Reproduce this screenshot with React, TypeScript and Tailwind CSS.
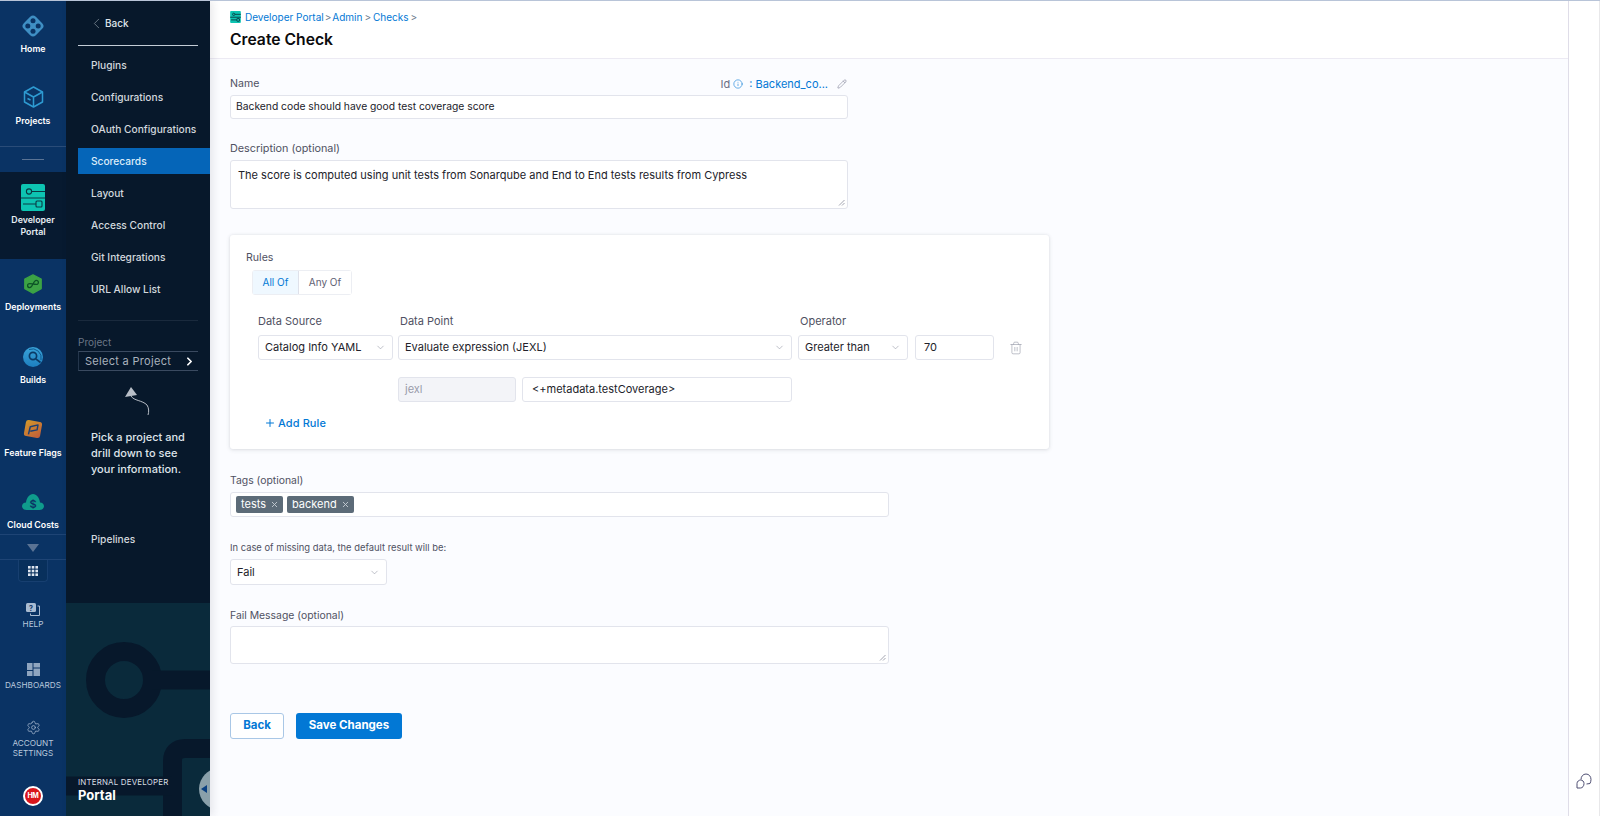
import { ChevronDown, ChevronLeft, ChevronRight, Info, Pencil, Plus, Settings, Trash2, X } from "lucide-react";

const font = "font-['Inter','Liberation_Sans',sans-serif]";

function NavItem({ label, className, gap, children }: { label: string; className: string; gap: string; children: React.ReactNode }) {
  return (
    <div className={`flex flex-col items-center ${className}`}>
      {children}
      <div className={`text-center text-[8.8px] font-semibold leading-[12px] text-white ${gap}`}>{label}</div>
    </div>
  );
}

function BottomItem({ lines, className, gap, children }: { lines: string[]; className: string; gap: string; children: React.ReactNode }) {
  return (
    <div className={`flex flex-col items-center ${className}`}>
      {children}
      <div className={`text-center text-[8.2px] leading-[10px] text-[#b9c8dc] ${gap}`}>
        {lines.map((l) => (
          <div key={l}>{l}</div>
        ))}
      </div>
    </div>
  );
}

function PortalIcon({ w, h, sw }: { w: number; h: number; sw: number }) {
  return (
    <svg width={w} height={h} viewBox="0 0 24 27">
      <rect width="24" height="27" rx="2" fill="#0dc4b2" />
      <path d="M0 14H24M10.5 7.5H24M15 20H2" stroke="#0a3a44" strokeWidth={sw} fill="none" />
      <circle cx="8" cy="7.5" r="2.6" fill="#0dc4b2" stroke="#0a3a44" strokeWidth={sw} />
      <rect x="15" y="17" width="6" height="6" rx="1" fill="#0dc4b2" stroke="#0a3a44" strokeWidth={sw} />
    </svg>
  );
}

function Rail() {
  return (
    <div className="flex w-[66px] shrink-0 flex-col bg-[#0a3364]">
      <NavItem label="Home" className="h-[67px] pt-[13px]" gap="mt-[5px]">
        <svg width="24" height="24" viewBox="0 0 24 24">
          <rect x="3.5" y="3.5" width="17" height="17" rx="4" transform="rotate(45 12 12)" fill="#3f8fc4" />
          <circle cx="12" cy="6.8" r="2.5" fill="#0a3364" />
          <circle cx="12" cy="17.2" r="2.5" fill="#0a3364" />
          <circle cx="6.8" cy="12" r="2.5" fill="#0a3364" />
          <circle cx="17.2" cy="12" r="2.5" fill="#0a3364" />
        </svg>
      </NavItem>
      <NavItem label="Projects" className="h-[78px] pt-[18px]" gap="mt-[7px]">
        <svg width="21" height="22" viewBox="0 0 21 22" fill="none" stroke="#2e9bd2" strokeWidth="1.5" strokeLinejoin="round">
          <path d="M10.5 1L19.5 6V16L10.5 21L1.5 16V6Z" />
          <path d="M1.5 6L10.5 11L19.5 6M10.5 11V21" />
          <path d="M4.5 12.5L7.5 14" />
        </svg>
      </NavItem>
      <div className="flex h-[26px] justify-center border-t border-[#2a4c78] pt-[12px]">
        <div className="h-px w-[22px] bg-[#5a7394]" />
      </div>
      <div className="flex h-[87px] flex-col items-center bg-[#071a30] pt-[12px]">
        <PortalIcon w={24} h={27} sw={1.1} />
        <div className="mt-[3px] text-center text-[8.8px] font-semibold leading-[12px] text-[#e8edf3]">
          Developer
          <br />
          Portal
        </div>
      </div>
      <NavItem label="Deployments" className="h-[73px] pt-[15px]" gap="mt-[7px]">
        <svg width="20" height="20" viewBox="0 0 22 22">
          <path d="M11 1L20 5.5V16L11 21L2 16V5.5Z" fill="#3ca345" strokeLinejoin="round" stroke="#3ca345" strokeWidth="1.5" />
          <path d="M7.5 15C4.5 15 4 10.5 7.5 10.5C9.5 10.5 12 11.5 14.5 11.5C18 11.5 17.5 7 14.5 7C11.5 7 10.5 15 7.5 15Z" fill="none" stroke="#0c5326" strokeWidth="1.4" />
        </svg>
      </NavItem>
      <NavItem label="Builds" className="h-[73px] pt-[15px]" gap="mt-[7px]">
        <svg width="20" height="20" viewBox="0 0 20 20">
          <defs>
            <linearGradient id="bd" x1="0" y1="0" x2="0" y2="1">
              <stop offset="0" stopColor="#3aa3d8" />
              <stop offset="1" stopColor="#1d7fc0" />
            </linearGradient>
          </defs>
          <circle cx="10" cy="10" r="10" fill="url(#bd)" />
          <path d="M6 2.5A9 9 0 0 1 18 13" fill="none" stroke="#0f5a92" strokeWidth="1" />
          <circle cx="10" cy="9" r="3.6" fill="none" stroke="#0b3a66" strokeWidth="1.7" />
          <path d="M12.8 11.8L17.5 15.5" stroke="#0b3a66" strokeWidth="1.7" />
        </svg>
      </NavItem>
      <NavItem label="Feature Flags" className="h-[73px] pt-[14px]" gap="mt-[8px]">
        <svg width="20" height="20" viewBox="0 0 22 22">
          <defs>
            <linearGradient id="ff" x1="0" y1="0" x2="1" y2="1">
              <stop offset="0" stopColor="#d39a2b" />
              <stop offset="1" stopColor="#c05a3a" />
            </linearGradient>
          </defs>
          <rect x="2" y="2" width="18" height="18" rx="3" transform="rotate(10 11 11)" fill="url(#ff)" />
          <path d="M6 17L8 8.5L16.5 6.5L15.5 12L8 13.5" fill="none" stroke="#1d3f73" strokeWidth="1.6" strokeLinejoin="round" />
        </svg>
      </NavItem>
      <NavItem label="Cloud Costs" className="h-[56px] pt-[16px]" gap="mt-[9px]">
        <svg width="22" height="16" viewBox="0 0 22 16">
          <path d="M4.5 16C1.5 16 0 14 0 12.2C0 10 1.8 8.5 4 8.5C4.5 4 7.5 0 11 0C14.5 0 17.5 4 18 8.5C20.2 8.5 22 10 22 12.2C22 14 20.5 16 17.5 16Z" fill="#0f9c8c" />
          <text x="11" y="13.5" textAnchor="middle" fontSize="11" fontWeight="600" fill="#0a3364">$</text>
        </svg>
      </NavItem>
      <div className="flex h-[26px] justify-center border-y border-y-[#1e4475] pt-[9px]">
        <div className="h-0 w-0 border-x-[6px] border-t-[8px] border-x-transparent border-t-[#5a7394]" />
      </div>
      <div className="mx-auto flex h-[22px] w-[30px] items-center justify-center rounded-b border-x border-b border-[#173f70] bg-[#08305c]">
        <svg width="10" height="10" viewBox="0 0 10 10" fill="#dfe7f1">
          <rect width="2.6" height="2.6" />
          <rect x="3.7" width="2.6" height="2.6" />
          <rect x="7.4" width="2.6" height="2.6" />
          <rect y="3.7" width="2.6" height="2.6" />
          <rect x="3.7" y="3.7" width="2.6" height="2.6" />
          <rect x="7.4" y="3.7" width="2.6" height="2.6" />
          <rect y="7.4" width="2.6" height="2.6" />
          <rect x="3.7" y="7.4" width="2.6" height="2.6" />
          <rect x="7.4" y="7.4" width="2.6" height="2.6" />
        </svg>
      </div>
      <BottomItem lines={["HELP"]} className="h-[68px] pt-[21px]" gap="mt-[3px]">
        <svg width="14" height="13" viewBox="0 0 14 13">
          <rect x="0" y="0" width="10" height="9" rx="1.5" fill="#a9bbd1" />
          <path d="M11.5 3H13.5V12.5H4.5V10.5" fill="none" stroke="#a9bbd1" strokeWidth="1" />
          <text x="5" y="7.5" textAnchor="middle" fontSize="7" fontWeight="700" fill="#0a3364">?</text>
        </svg>
      </BottomItem>
      <BottomItem lines={["DASHBOARDS"]} className="h-[60px] pt-[13px]" gap="mt-[4px]">
        <svg width="13" height="13" viewBox="0 0 13 13" fill="#8fa5bf">
          <rect width="5.5" height="7" />
          <rect x="6.5" width="6.5" height="4.5" />
          <rect y="8" width="5.5" height="5" />
          <rect x="6.5" y="5.5" width="6.5" height="7.5" />
        </svg>
      </BottomItem>
      <BottomItem lines={["ACCOUNT", "SETTINGS"]} className="h-[76px] pt-[10px]" gap="mt-[3px]">
        <Settings size={15} strokeWidth={1.2} className="text-[#a9bbd1]" />
      </BottomItem>
      <div className="flex justify-center">
        <div className="flex h-[20px] w-[20px] items-center justify-center rounded-full border-2 border-white bg-[#d9161c] text-[7px] font-bold tracking-[-0.3px] text-white">
          HM
        </div>
      </div>
    </div>
  );
}

const links = ["Plugins", "Configurations", "OAuth Configurations", "Scorecards", "Layout", "Access Control", "Git Integrations", "URL Allow List"];

function SubNav() {
  return (
    <div className="relative z-10 flex w-[144px] shrink-0 flex-col overflow-hidden bg-[#07182b] shadow-[3px_0_8px_rgba(40,41,61,0.1)]">
      <div className="mx-[12px] flex h-[45px] items-center border-b border-[#c4ccd6] pl-[10px] pt-px text-[10px] font-medium text-[#dfe4ea]">
        <ChevronLeft size={17} strokeWidth={1.2} className="text-[#76838f]" />
        Back
      </div>
      <div className="mt-[6px] flex flex-col gap-[6px] pl-[12px]">
        {links.map((l) => (
          <div
            key={l}
            className={`flex h-[26px] items-center pl-[13px] pt-[2px] text-[10.2px] font-medium ${l === "Scorecards" ? "bg-[#0565b8] text-[#dcecf9]" : "text-[#d3d8de]"}`}
          >
            {l}
          </div>
        ))}
      </div>
      <div className="mx-[12px] mt-[18px] border-t border-[#1a2a3d] pt-[15px] text-[10px] leading-[12px] text-[#6b7686]">Project</div>
      <div className="mx-[12px] mt-[3px] flex h-[20px] items-center justify-between border-y border-y-[#3a4a60] border-l border-l-[#24364c] pl-[6px] pr-[2px] pt-px text-[11px] tracking-[0.3px] text-[#a9b2bd]">
        Select a Project
        <ChevronRight size={13} strokeWidth={3.2} className="text-white" />
      </div>
      <svg width="30" height="30" viewBox="0 0 30 30" className="ml-[54px] mt-[14px]">
        <path d="M5 12L11 2L17 10Z" fill="#b8bec7" />
        <path d="M11 11C14 16 22 15 27 20C29 23 29 27 28 30" fill="none" stroke="#c9ced6" strokeWidth="0.9" />
      </svg>
      <div className="ml-[25px] mt-[14px] text-[11px] font-medium leading-[16px] text-[#dfe4ea]">
        Pick a project and
        <br />
        drill down to see
        <br />
        your information.
      </div>
      <div className="ml-[25px] mt-[55px] text-[10.2px] font-medium leading-[15px] text-[#d3d8de]">Pipelines</div>
      <div className="relative mt-[56px] flex-1 overflow-hidden bg-[#0a2a3b]">
        <svg width="144" height="213" viewBox="0 0 144 213" className="absolute left-0 top-0">
          <circle cx="58" cy="77" r="28.5" fill="none" stroke="#07182b" strokeWidth="19" />
          <path d="M86 77H144" stroke="#07182b" strokeWidth="19" />
          <path d="M106.5 213V158C106.5 150 111 145.5 119 145.5H144" fill="none" stroke="#07182b" strokeWidth="19" />
          <path d="M0 183H106" stroke="#07182b" strokeWidth="19" />
        </svg>
        <div className="absolute bottom-0 left-0 whitespace-nowrap pb-[12px] pl-[12px] text-white">
          <div className="text-[7.9px] leading-[10px] tracking-[0.2px] text-[#d8dde3]">INTERNAL DEVELOPER</div>
          <div className="text-[13px] font-bold leading-[17px]">Portal</div>
        </div>
        <div className="absolute bottom-[6px] right-[-10px] flex h-[42px] w-[21px] items-center rounded-l-full bg-[#8aa0aa] pl-[2px]">
          <div className="h-0 w-0 border-y-[4px] border-r-[6px] border-y-transparent border-r-[#0a3f80]" />
        </div>
      </div>
    </div>
  );
}

function Label({ children, className = "", size = "text-[10.6px]" }: { children: React.ReactNode; className?: string; size?: string }) {
  return <div className={`leading-[14px] text-[#4f5162] ${size} ${className}`}>{children}</div>;
}

function Field({ className = "", size = "text-[11px]", children }: { className?: string; size?: string; children?: React.ReactNode }) {
  return (
    <div className={`flex items-center rounded-[3px] border border-[#e2e4ec] bg-white text-[#22222a] ${size} ${className}`}>{children}</div>
  );
}

function Select({ value, className }: { value: string; className: string }) {
  return (
    <Field className={`justify-between px-[6px] ${className}`}>
      {value}
      <ChevronDown size={11} strokeWidth={1.2} className="text-[#8a8d9c]" />
    </Field>
  );
}

function Grip() {
  return (
    <svg width="7" height="7" viewBox="0 0 7 7" className="absolute bottom-[2px] right-[2px]">
      <path d="M1 6.5L6.5 1M4 6.5L6.5 4" stroke="#8a8d9c" strokeWidth="0.8" />
    </svg>
  );
}

function Tag({ label }: { label: string }) {
  return (
    <div className="flex h-[17px] items-center gap-[4px] rounded-[2px] bg-[#5c6b78] pl-[5px] pr-[4px] text-[11px] text-white">
      {label}
      <X size={9} strokeWidth={2.5} className="text-[#c3cbd2]" />
    </div>
  );
}

function Form() {
  return (
    <div className="flex-1 bg-[#fbfcff] pl-[20px] pt-[18px]">
      <div className="w-[618px]">
        <div className="flex h-[14px] items-center justify-between pr-[1px]">
          <Label>Name</Label>
          <div className="flex items-center text-[11px] text-[#6b6d85]">
            Id
            <Info size={10} strokeWidth={1.4} className="ml-[3px] text-[#0278d5]" />
            <span className="ml-[6px] text-[#0278d5]">: Backend_co...</span>
            <Pencil size={10} strokeWidth={1.2} className="ml-[9px] text-[#6b6d85]" />
          </div>
        </div>
        <Field size="text-[10.3px]" className="mt-[4px] h-[24px] pl-[5px]">Backend code should have good test coverage score</Field>
        <Label size="text-[10.8px]" className="mt-[23px]">Description (optional)</Label>
        <Field className="relative mt-[4px] h-[49px] items-start pl-[7px] pt-[6px]">
          The score is computed using unit tests from Sonarqube and End to End tests results from Cypress
          <Grip />
        </Field>
      </div>
      <div className="mt-[26px] h-[214px] w-[819px] rounded-[3px] bg-white pl-[16px] pt-[16px] shadow-[0_0_3px_rgba(40,41,61,0.08),0_1px_4px_rgba(96,97,112,0.16)]">
        <Label>Rules</Label>
        <div className="ml-[6px] mt-[5px] flex h-[25px] w-[100px] rounded-[3px] border border-[#eceef3] text-[10px]">
          <div className="flex w-[46px] items-center justify-center border-r border-[#dfe1ea] bg-[#eff8ff] text-[#0278d5]">All Of</div>
          <div className="flex flex-1 items-center justify-center bg-white text-[#5f6173]">Any Of</div>
        </div>
        <div className="ml-[12px] mt-[19px] flex gap-[6px]">
          <Label size="text-[11px]" className="w-[136px]">Data Source</Label>
          <Label size="text-[11px]" className="w-[394px]">Data Point</Label>
          <Label size="text-[11px]">Operator</Label>
        </div>
        <div className="ml-[12px] mt-[7px] flex h-[25px] items-center">
          <Select value="Catalog Info YAML" className="h-full w-[135px]" />
          <Select value="Evaluate expression (JEXL)" className="ml-[5px] h-full w-[394px]" />
          <Select value="Greater than" className="ml-[6px] h-full w-[110px]" />
          <Field className="ml-[7px] h-full w-[79px] pl-[8px]">70</Field>
          <Trash2 size={14} strokeWidth={1.1} className="ml-[15px] text-[#9a9cab]" />
        </div>
        <div className="ml-[152px] mt-[17px] flex h-[25px] gap-[6px]">
          <div className="flex w-[118px] items-center rounded-[3px] border border-[#e2e4ec] bg-[#f3f4f8] pl-[6px] text-[11px] text-[#9a9cab]">jexl</div>
          <Field className="w-[270px] pl-[9px]">{"<+metadata.testCoverage>"}</Field>
        </div>
        <div className="ml-[18px] mt-[13px] flex items-center gap-[2px] text-[11px] font-medium tracking-[0.1px] text-[#0278d5]">
          <Plus size={12} strokeWidth={2} />
          Add Rule
        </div>
      </div>
      <div className="w-[659px]">
        <Label size="text-[10.4px]" className="mt-[25px]">Tags (optional)</Label>
        <Field className="mt-[4px] h-[25px] gap-[4px] pl-[5px]">
          <Tag label="tests" />
          <Tag label="backend" />
        </Field>
        <div className="mt-[25px] text-[9.4px] leading-[12px] text-[#4f5162]">In case of missing data, the default result will be:</div>
        <Select value="Fail" className="mt-[5px] h-[26px] w-[157px]" />
        <Label size="text-[10.4px]" className="mt-[24px]">Fail Message (optional)</Label>
        <Field className="relative mt-[3px] h-[38px]">
          <Grip />
        </Field>
      </div>
      <div className="mt-[49px] flex gap-[12px] text-[11.5px] font-bold">
        <div className="flex h-[26px] w-[54px] items-center justify-center rounded-[3px] border border-[#a9c7e6] bg-white text-[#0278d5]">Back</div>
        <div className="flex h-[26px] w-[106px] items-center justify-center rounded-[3px] bg-[#0278d5] text-white">Save Changes</div>
      </div>
    </div>
  );
}

export default function App() {
  return (
    <div className={`flex h-[816px] w-[1600px] overflow-hidden border-t border-[#b8c4d8] bg-white ${font}`}>
      <Rail />
      <SubNav />
      <div className="flex min-w-0 flex-1 flex-col">
        <div className="h-[58px] shrink-0 border-b border-[#eceaf3] bg-white pl-[20px] pt-[10px]">
          <div className="flex h-[12px] items-center text-[10px] text-[#0278d5]">
            <span className="mr-[4px] flex">
              <PortalIcon w={11} h={12} sw={2} />
            </span>
            Developer Portal <span className="mx-[1px] text-[#6b7a8c]">&gt;</span> Admin <span className="mx-[2px] text-[#6b7a8c]">&gt;</span> Checks <span className="ml-[2px] text-[#6b7a8c]">&gt;</span>
          </div>
          <div className="mt-[6px] text-[15.7px] font-semibold leading-[22px] text-[#0b0b0d]">Create Check</div>
        </div>
        <Form />
      </div>
      <div className="flex w-[32px] shrink-0 flex-col items-center justify-end border-x border-l-[#dfdde8] border-r-[#e8e8ea] pb-[27px]">
        <svg width="16" height="16" viewBox="0 0 16 16" fill="none" stroke="#4f4f73" strokeWidth="1">
          <path d="M5 6.5C5 3.5 7 1 10 1C13 1 15 3.5 15 6.5C15 8 14.5 9.5 14 10.5L10.5 11" />
          <path d="M1 15V10.5C1 8.5 3 7 4.5 7C6.5 7 8 8.5 8 10.5C8 13 6.5 15 4.5 15Z" />
        </svg>
      </div>
    </div>
  );
}
